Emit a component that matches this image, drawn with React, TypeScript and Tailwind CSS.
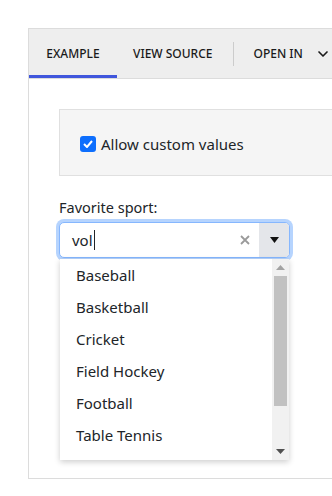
import { ChevronDown } from "lucide-react";

const sports = [
  "Baseball",
  "Basketball",
  "Cricket",
  "Field Hockey",
  "Football",
  "Table Tennis",
];

function TabBar() {
  return (
    <div className="flex h-[50px] items-stretch border-b border-[#dcdcdc] bg-[#eeeeee] text-[12px] font-medium text-[#1a1a1a]">
      <div className="relative flex w-[88px] items-center justify-center">
        EXAMPLE
        <span className="absolute bottom-0 left-0 h-[3px] w-full bg-[#4056dc]" />
      </div>
      <div className="flex items-center pl-4 pr-[21px]">VIEW SOURCE</div>
      <div className="my-auto h-6 w-px bg-[#cccccc]" />
      <div className="flex items-center gap-[12px] pl-[19px]">
        OPEN IN
        <ChevronDown size={16} strokeWidth={2.5} />
      </div>
    </div>
  );
}

function Scrollbar() {
  return (
    <div className="flex w-[17px] flex-col items-center bg-[#f1f1f1]">
      <div className="flex h-[17px] items-center justify-center">
        <svg width="9" height="5" viewBox="0 0 9 5">
          <path d="M0 5 L4.5 0 L9 5 Z" fill="#a3a3a3" />
        </svg>
      </div>
      <div className="h-[130px] w-[13px] bg-[#c1c1c1]" />
      <div className="flex-1" />
      <div className="flex h-[17px] items-center justify-center">
        <svg width="9" height="5" viewBox="0 0 9 5">
          <path d="M0 0 L9 0 L4.5 5 Z" fill="#505050" />
        </svg>
      </div>
    </div>
  );
}

function Combobox() {
  return (
    <div className="relative w-[231px]">
      <div className="flex h-[36px] rounded-[5px] border border-[#86b7fe] bg-white shadow-[0_0_0_3px_#b6d4fe]">
        <div className="flex flex-1 items-center pl-3 text-[15px] text-[#212529]">
          vol
          <span className="ml-px h-[20px] w-px bg-[#212529]" />
        </div>
        <div className="flex w-[28px] items-center justify-center">
          <svg width="10" height="10" viewBox="0 0 10 10">
            <path d="M1 1 L9 9 M9 1 L1 9" stroke="#9a9a9a" strokeWidth="1.8" />
          </svg>
        </div>
        <div className="flex w-[30px] items-center justify-center rounded-r-[4px] bg-[#e4e6ea]">
          <svg width="9" height="6" viewBox="0 0 9 6">
            <path d="M0 0 L9 0 L4.5 6 Z" fill="#111111" />
          </svg>
        </div>
      </div>
      <div className="absolute left-px top-[37px] flex h-[201px] w-[229px] bg-white shadow-[0_2px_6px_rgba(0,0,0,0.2)]">
        <ul className="flex-1 overflow-hidden text-[15px] text-[#212529]">
          {sports.map((s) => (
            <li key={s} className="flex h-8 items-center pl-4">
              {s}
            </li>
          ))}
        </ul>
        <Scrollbar />
      </div>
    </div>
  );
}

export default function App() {
  return (
    <div
      className="h-[496px] w-[332px] overflow-hidden bg-white pl-[28px] pt-[28px]"
      style={{ fontFamily: '"Noto Sans", sans-serif' }}
    >
      <div className="h-[451px] w-[420px] border-b border-l border-t border-[#dcdcdc]">
        <TabBar />
        <div className="pl-[30px] pt-[30px]">
          <div className="flex h-[67px] items-center border border-[#e0e0e0] bg-[#f5f5f5] pl-5 pt-[3px]">
            <span className="flex h-4 w-4 items-center justify-center rounded-[3px] bg-[#0d6efd]">
              <svg width="10" height="8" viewBox="0 0 10 8">
                <path d="M1 4 L4 7 L9 1" stroke="white" strokeWidth="2" fill="none" />
              </svg>
            </span>
            <span className="ml-[5px] text-[15px] text-[#212529]">Allow custom values</span>
          </div>
          <div className="mt-[21px] text-[14.5px] leading-[20px] text-[#212529]">Favorite sport:</div>
          <div className="mt-[5px]">
            <Combobox />
          </div>
        </div>
      </div>
    </div>
  );
}
